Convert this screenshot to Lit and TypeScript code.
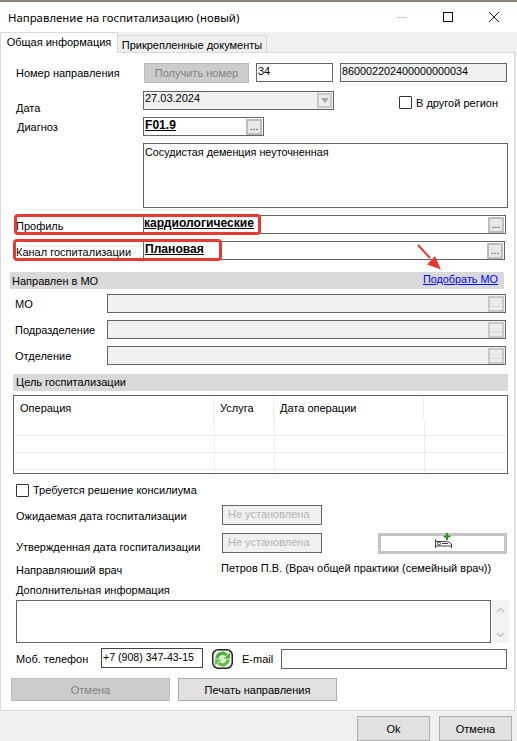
import { LitElement, html, css } from "lit";
import { customElement } from "lit/decorators.js";

const dots = (disabled = false) =>
  html`<span class="dots ${disabled ? "off" : ""}">...</span>`;

@customElement("app-root")
export class AppRoot extends LitElement {
  static styles = css`
    :host {
      display: block;
      position: relative;
      width: 517px;
      height: 741px;
      overflow: hidden;
      background: #f0f0f0;
      font-family: "Liberation Sans", Arial, sans-serif;
      font-size: 11px;
      color: #000;
      box-sizing: border-box;
    }
    * { box-sizing: border-box; }
    .top { height: 2px; background: #8d8578; }
    .titlebar {
      height: 30px;
      background: #fff;
      display: flex;
      align-items: center;
      padding-left: 8px;
      font-family: "Noto Sans", sans-serif;
      font-size: 11.4px;
    }
    .title { flex: 1; padding-top: 1px; }
    .winbtn { width: 46px; height: 30px; display: flex; align-items: center; justify-content: center; }
    .winbtn svg { display: block; }
    .tabs { display: flex; height: 21px; align-items: flex-start; position: relative; z-index: 1; margin-bottom: -1px; }
    .tab { display: flex; align-items: center; justify-content: center; white-space: nowrap; font-size: 11px; }
    .tab.on { width: 118px; height: 21px; background: #fff; border: 1px solid #d9d9d9; border-bottom: none; padding-bottom: 2px; }
    .tab.off { width: 149px; height: 18px; margin-top: 3px; background: #f0f0f0; border: 1px solid #d9d9d9; border-left: none; padding-top: 1px; }
    .panel {
      width: 515px;
      height: 659px;
      background: #fff;
      border: 1px solid #d9d9d9;
      display: flex;
      flex-direction: column;
    }
    .row { display: flex; align-items: flex-start; flex: none; }
    .lbl { white-space: nowrap; flex: none; }
    .field {
      flex: none;
      height: 19px;
      border: 1px solid #646464;
      background: #fff;
      padding-left: 1px;
      display: flex;
      align-items: flex-start;
      justify-content: space-between;
      line-height: 14px;
      white-space: nowrap;
    }
    .field.grey { background: #f0f0f0; }
    .field b { font-size: 12.1px; line-height: 15px; text-decoration: underline; }
    .dots {
      flex: none;
      width: 16px;
      height: 16px;
      margin: 1px 1px 0 0;
      background: #e8e8e8;
      border: 2px solid #bdbdbd;
      font-size: 10px;
      line-height: 12px;
      text-align: center;
      color: #222;
    }
    .dots.off { border-color: #c8c8c8; background: #ececec; color: #b0b0b0; }
    .btn {
      flex: none;
      display: flex;
      align-items: center;
      justify-content: center;
      border: 1px solid #adadad;
      background: #e1e1e1;
    }
    .btn.dis { background: #cccccc; color: #838383; border-color: #bcbcbc; }
    .check { flex: none; width: 13px; height: 13px; border: 1px solid #333; border-radius: 1px; background: #fff; }
    .section { flex: none; height: 17px; background: #d9d9d9; display: flex; align-items: center; justify-content: space-between; }
    .section a { color: #0000ff; text-decoration: underline; margin-right: 6px; margin-top: -3px; font-size: 10.85px; }

    .r1 { margin: 10px 0 0 15px; height: 20px; }
    .r1 .lbl { width: 128px; line-height: 20px; }
    .getnum { width: 105px; height: 20px; }
    .num { width: 77px; margin-left: 7px; }
    .code { width: 167px; margin-left: 7px; font-size: 10.8px; }
    .r2 { margin: 8px 0 0 15px; height: 19px; }
    .r2 .lbl { width: 127px; padding-top: 11px; }
    .date { width: 191px; padding-right: 1px; }
    .date > span:first-child { margin-top: -1px; }
    .drop { flex: none; width: 15px; height: 15px; margin-top: 1px; background: #ececec; border: 2px solid #c8c8c8; display: flex; align-items: center; justify-content: center; }
    .tri { width: 0; height: 0; border-left: 4px solid transparent; border-right: 4px solid transparent; border-top: 5px solid #a8a8a8; }
    .chkwrap { display: flex; align-items: center; gap: 4px; margin: 5px 0 0 65px; }
    .r3 { margin: 7px 0 0 16px; height: 19px; }
    .r3 .lbl { width: 126px; line-height: 20px; }
    .diag { width: 121px; }
    .area { margin: 7px 0 0 142px; width: 365px; height: 65px; border: 1px solid #646464; padding: 2px 1px; flex: none; font-size: 10.8px; }
    .r5 { margin: 7px 0 0 15px; height: 19px; }
    .r5 .lbl { width: 127px; padding-top: 5px; }
    .prof { width: 363px; padding-left: 0; }
    .r6 { margin: 7px 0 0 15px; height: 19px; }
    .r6 .lbl { width: 127px; padding-top: 5px; }
    .chan { width: 362px; }
    .sec1 { margin: 12px 0 0 9px; width: 494px; padding-left: 2px; }
    .r7 { margin: 5px 0 0 14px; height: 19px; }
    .r7 .lbl { width: 92px; padding-top: 4px; }
    .r8 { margin-top: 7px; }
    .mo { width: 399px; }
    .sec2 { margin: 9px 0 0 12px; width: 495px; padding-left: 3px; padding-bottom: 1px; }
    .table { flex: none; margin: 4px 0 0 12px; width: 495px; height: 79px; border: 1px solid #646464; }
    .thead { display: grid; grid-template-columns: 200px 60px 150px 1fr; height: 24px; }
    .thead span { padding: 6px 0 0 6px; border-right: 1px solid #eee; }
    .thead span:last-child { border: none; }
    .tbody { display: grid; grid-template-columns: 201px 60px 150px 1fr; grid-template-rows: 16px 17px 17px 1fr; height: 53px; }
    .tbody i { border-right: 1px solid #eee; border-bottom: 1px solid #eee; }
    .tbody i:nth-child(4n) { border-right: none; }
    .tbody i:nth-last-child(-n+4) { border-bottom: none; }
    .r9 { margin: 10px 0 0 15px; align-items: center; gap: 4px; height: 13px; }
    .r9 .lbl { margin-top: -1px; }
    .r10 { margin: 8px 0 0 15px; height: 20px; }
    .r10 .lbl { width: 206px; padding-top: 5px; }
    .dateinp { width: 100px; height: 20px; border: 1px solid #646464; background: #f0f0f0; color: #b4b4b4; padding: 2px 0 0 5px; flex: none; }
    .r11 { margin: 8px 0 0 15px; height: 21px; }
    .r11 .lbl { width: 206px; padding-top: 8px; }
    .bed { width: 129px; height: 21px; margin-left: 56px; border: 3px solid #c4c4c4; background: #fff; display: flex; align-items: flex-start; justify-content: center; flex: none; overflow: visible; }
    .bed svg { margin-top: -3px; display: block; }
    .r12 { margin: 6px 0 0 15px; height: 16px; }
    .r12 .lbl { width: 205px; padding-top: 4px; }
    .r12 .lbl + .lbl { padding-top: 2px; }
    .r13 { margin: 8px 0 0 15px; height: 14px; }
    .r14 { margin: 2px 0 0 15px; height: 43px; }
    .ta { width: 475px; height: 43px; border: 1px solid #646464; flex: none; }
    .sb { width: 17px; height: 43px; margin-left: 1px; background: #f2f2f2; display: flex; flex-direction: column; justify-content: space-between; align-items: center; padding: 7px 0 5px; flex: none; }
    .r15 { margin: 5px 0 0 15px; height: 22px; }
    .r15 .lbl { padding-top: 5px; width: 85px; }
    .phone { width: 102px; height: 20px; border: 1px solid #444; padding: 2px 0 0 1px; font-size: 10.6px; flex: none; white-space: nowrap; }
    .refresh { margin: 1px 0 0 9px; flex: none; display: block; }
    .r15 .email-l { margin-left: 9px; width: 39px; }
    .email { width: 226px; height: 20px; margin-top: 1px; border: 1px solid #646464; flex: none; }
    .r16 { margin: 8px 0 0 10px; gap: 8px; height: 23px; }
    .r16 .btn { width: 159px; height: 23px; }
    .foot { display: flex; margin: 5px 0 0 357px; gap: 9px; }
    .foot .btn { width: 73px; height: 25px; background: #e1e1e1; }
    .redbox { position: absolute; border: 3px solid #e53b32; border-radius: 4px; }
    .rb1 { left: 14px; top: 214px; width: 247px; height: 21px; }
    .rb2 { left: 13px; top: 239px; width: 209px; height: 22px; }
    .arrow { position: absolute; left: 410px; top: 240px; }
  `;

  render() {
    return html`
      <div class="top"></div>
      <div class="titlebar">
        <span class="title">Направление на госпитализацию (новый)</span>
        <span class="winbtn"><svg width="10" height="10"><path d="M0 5.5h10" stroke="#c9c9c9"/></svg></span>
        <span class="winbtn"><svg width="10" height="10"><rect x=".5" y=".5" width="9" height="9" fill="none" stroke="#111"/></svg></span>
        <span class="winbtn"><svg width="10" height="10"><path d="M0 0l10 10M10 0L0 10" stroke="#222" fill="none"/></svg></span>
      </div>
      <div class="tabs">
        <div class="tab on">Общая информация</div>
        <div class="tab off">Прикрепленные документы</div>
      </div>
      <div class="panel">
        <div class="row r1">
          <span class="lbl">Номер направления</span>
          <span class="btn dis getnum">Получить номер</span>
          <span class="field num">34</span>
          <span class="field grey code">860002202400000000034</span>
        </div>
        <div class="row r2">
          <span class="lbl">Дата</span>
          <span class="field grey date"><span>27.03.2024</span><span class="drop"><span class="tri"></span></span></span>
          <span class="chkwrap"><span class="check"></span><span>В другой регион</span></span>
        </div>
        <div class="row r3">
          <span class="lbl">Диагноз</span>
          <span class="field diag"><b>F01.9</b>${dots()}</span>
        </div>
        <div class="area">Сосудистая деменция неуточненная</div>
        <div class="row r5">
          <span class="lbl">Профиль</span>
          <span class="field prof"><b>кардиологические</b>${dots()}</span>
        </div>
        <div class="row r6">
          <span class="lbl">Канал госпитализации</span>
          <span class="field chan"><b>Плановая</b>${dots()}</span>
        </div>
        <div class="section sec1"><span>Направлен в МО</span><a>Подобрать МО</a></div>
        <div class="row r7">
          <span class="lbl">МО</span>
          <span class="field grey mo"><span></span>${dots(true)}</span>
        </div>
        <div class="row r7 r8">
          <span class="lbl">Подразделение</span>
          <span class="field grey mo"><span></span>${dots(true)}</span>
        </div>
        <div class="row r7 r8">
          <span class="lbl">Отделение</span>
          <span class="field grey mo"><span></span>${dots(true)}</span>
        </div>
        <div class="section sec2"><span>Цель госпитализации</span></div>
        <div class="table">
          <div class="thead"><span>Операция</span><span>Услуга</span><span>Дата операции</span><span></span></div>
          <div class="tbody">
            ${Array.from({ length: 16 }, () => html`<i></i>`)}
          </div>
        </div>
        <div class="row r9"><span class="check"></span><span class="lbl">Требуется решение консилиума</span></div>
        <div class="row r10">
          <span class="lbl">Ожидаемая дата госпитализации</span>
          <span class="dateinp">Не установлена</span>
        </div>
        <div class="row r11">
          <span class="lbl">Утвержденная дата госпитализации</span>
          <span class="dateinp">Не установлена</span>
          <span class="bed">
            <svg width="22" height="15" viewBox="0 0 22 15">
              <g fill="none" stroke="#444" stroke-width="1">
                <path d="M3.5 6v9M19.5 11v4M3.5 13h16M4 8.500h9c3 0 6 1 6.500 3"/>
                <circle cx="7" cy="10.500" r="1.500"/>
                <path d="M10 10.500h6"/>
              </g>
              <path d="M14 0h2v2.500h2.500v2h-2.500v2.500h-2v-2.500h-2.500v-2h2.500z" fill="#2e8b2e"/>
            </svg>
          </span>
        </div>
        <div class="row r12">
          <span class="lbl">Направляюший врач</span>
          <span class="lbl">Петров П.В. (Врач общей практики (семейный врач))</span>
        </div>
        <div class="row r13"><span class="lbl">Дополнительная информация</span></div>
        <div class="row r14">
          <span class="ta"></span>
          <span class="sb">
            <svg width="9" height="6"><path d="M1 5l3.500-3.500L8 5" fill="none" stroke="#c4c4c4" stroke-width="1.500"/></svg>
            <svg width="9" height="6"><path d="M1 1l3.500 3.500L8 1" fill="none" stroke="#c4c4c4" stroke-width="1.500"/></svg>
          </span>
        </div>
        <div class="row r15">
          <span class="lbl">Моб. телефон</span>
          <span class="phone">+7 (908) 347-43-15</span>
          <svg class="refresh" width="21" height="20" viewBox="0 0 21 20">
            <rect x=".75" y=".75" width="19.500" height="18.500" rx="5.500" fill="#f4f8f2" stroke="#222" stroke-width="1.500"/>
            <circle cx="10.500" cy="10" r="7.500" fill="#d8efcb"/>
            <path d="M5 9.500a5.500 5.500 0 0 1 9.500-3.500" fill="none" stroke="#52ad3c" stroke-width="3.200"/>
            <path d="M12 9.500h6v-6z" fill="#52ad3c"/>
            <path d="M16 10.500a5.500 5.500 0 0 1-9.500 3.500" fill="none" stroke="#63bb47" stroke-width="3.200"/>
            <path d="M9 10.500h-6v6z" fill="#63bb47"/>
          </svg>
          <span class="lbl email-l">E-mail</span>
          <span class="email"></span>
        </div>
        <div class="row r16">
          <span class="btn dis">Отмена</span>
          <span class="btn">Печать направления</span>
        </div>
      </div>
      <div class="foot">
        <span class="btn">Ok</span>
        <span class="btn">Отмена</span>
      </div>
      <div class="redbox rb1"></div>
      <div class="redbox rb2"></div>
      <svg class="arrow" width="40" height="35" viewBox="410 240 40 35">
        <path d="M418 245l12 13" stroke="#e53b32" stroke-width="2" fill="none"/>
        <path d="M441 269.500L427 264.500L435 256z" fill="#e53b32"/>
      </svg>
    `;
  }
}
